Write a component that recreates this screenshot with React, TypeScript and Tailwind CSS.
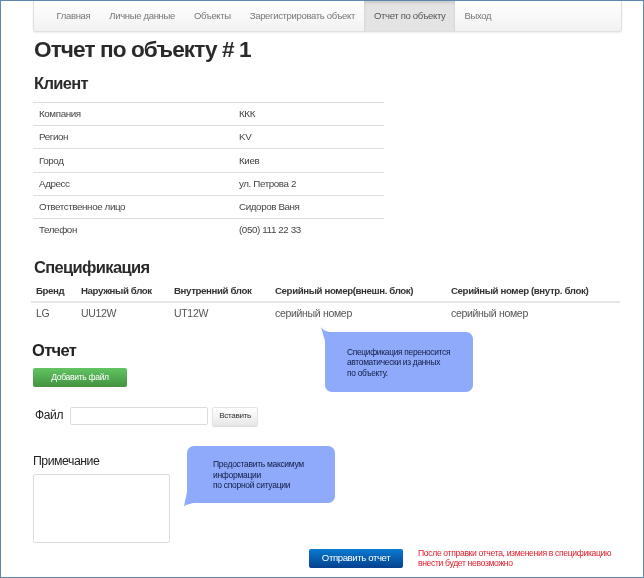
const navItems = ['Главная', 'Личные данные', 'Объекты', 'Зарегистрировать объект', 'Отчет по объекту', 'Выход'];

const clientRows = [
  ['Компания', 'ККК'],
  ['Регион', 'KV'],
  ['Город', 'Киев'],
  ['Адресс', 'ул. Петрова 2'],
  ['Ответственное лицо', 'Сидоров Ваня'],
  ['Телефон', '(050) 111 22 33'],
];

const specCols = [
  ['Бренд', 'LG', 'w-[45px]'],
  ['Наружный блок', 'UU12W', 'w-[93px]'],
  ['Внутренний блок', 'UT12W', 'w-[101px]'],
  ['Серийный номер(внешн. блок)', 'серийный номер', 'w-[176px]'],
  ['Серийный номер (внутр. блок)', 'серийный номер', 'w-[170px]'],
];

export default function App() {
  return (
    <div className="relative h-[578px] w-[644px] overflow-hidden border border-[#5f87ad] bg-white pl-[32px] font-['Liberation_Sans',Arial,sans-serif] text-[#333] blur-[0.35px]">
      {/* nav */}
      <div className="flex h-[31px] w-[589px] items-stretch rounded-b-[3px] border border-t-0 border-[#e0e0e0] bg-gradient-to-b from-white to-[#f2f2f2] pl-[13px] text-[9.5px] tracking-[-0.035em] text-[#777] shadow-[0_1px_2px_rgba(0,0,0,0.08)]">
        {navItems.map((item, i) => (
          <div
            key={item}
            className={
              i === 4
                ? 'flex items-center bg-[#e4e4e4] px-[9.5px] text-[#555] shadow-[inset_0_2px_3px_rgba(0,0,0,0.12)]'
                : 'flex items-center px-[9.5px]'
            }
          >
            {item}
          </div>
        ))}
      </div>

      <h1 className="mt-[5px] ml-[1px] text-[22.6px] leading-[26px] font-bold tracking-[-0.04em] text-[#2a2a2a]">Отчет по объекту # 1</h1>
      <h2 className="mt-[10px] ml-[1px] text-[16.5px] leading-[20px] font-bold tracking-[-0.04em] text-[#2a2a2a]">Клиент</h2>

      <table className="mt-[9px] w-[351px] border-collapse text-[9.8px] tracking-[-0.04em] text-[#444]">
        <tbody>
          {clientRows.map(([label, value]) => (
            <tr key={label} className="h-[23.2px] border-t border-[#dedede]">
              <td className="w-[206px] pt-[1px] pl-[6px]">{label}</td>
              <td className="pt-[1px]">{value}</td>
            </tr>
          ))}
        </tbody>
      </table>

      <h2 className="mt-[15px] ml-[1px] text-[16.5px] leading-[20px] font-bold tracking-[-0.04em] text-[#2a2a2a]">Спецификация</h2>

      <div className="mt-[6px] -ml-[2px] w-[589px]">
        <div className="flex h-[20px] items-center border-b-2 border-[#e6e6e6] pl-[5px] text-[9.7px] font-bold tracking-[-0.04em] text-[#333]">
          {specCols.map(([head, , width]) => (
            <div key={head} className={`${width} shrink-0 whitespace-nowrap`}>
              {head}
            </div>
          ))}
        </div>
        <div className="flex h-[22px] items-center pl-[5px] text-[10.5px] tracking-[-0.03em] text-[#555]">
          {specCols.map(([head, cell, width]) => (
            <div key={head} className={`${width} shrink-0 whitespace-nowrap`}>
              {cell}
            </div>
          ))}
        </div>
      </div>

      <h2 className="mt-[15px] -ml-[1px] text-[16.5px] leading-[20px] font-bold tracking-[-0.04em] text-[#222]">Отчет</h2>

      <button className="mt-[8px] flex h-[19px] w-[94px] items-center justify-center rounded-[2px] bg-gradient-to-b from-[#62c462] to-[#43923f] text-[8.6px] tracking-[-0.04em] text-white">
        Добавить файл
      </button>

      <div className="mt-[20px] flex items-start">
        <span className="mt-[1px] ml-[2px] w-[35px] text-[12px] leading-[15px] tracking-[-0.03em] text-[#222]">Файл</span>
        <div className="h-[18px] w-[138px] rounded-[2px] border border-[#dcdcdc] bg-white" />
        <button className="ml-[4px] h-[19px] w-[46px] rounded-[2px] border border-[#e4e4e4] bg-gradient-to-b from-white to-[#e8e8e8] text-[8.1px] tracking-[-0.04em] text-[#333] shadow-[0_1px_1px_rgba(0,0,0,0.15)]">
          Вставить
        </button>
      </div>

      <div className="mt-[28px] text-[12.3px] leading-[15px] tracking-[-0.04em] text-[#222]">Примечание</div>
      <div className="mt-[5px] h-[69px] w-[137px] rounded-[2px] border border-[#dcdcdc] bg-white" />

      {/* callouts */}
      <div className="absolute top-[331px] left-[324px] flex h-[60px] w-[148px] items-start rounded-[7px] bg-[#8fa9fb] pt-[15px] pl-[22px] text-[8.4px] leading-[10.3px] tracking-[-0.035em] text-[#111d45]">
        <svg className="absolute -top-[5px] -left-[4px]" width="14" height="14" viewBox="0 0 14 14">
          <path d="M0 0 C2 3 5 5 12 5 L12 14 L4 14 Z" fill="#8fa9fb" />
        </svg>
        <div className="relative">
          Спецификация переносится
          <br />
          автоматически из данных
          <br />
          по объекту.
        </div>
      </div>

      <div className="absolute top-[445px] left-[186px] flex h-[57px] w-[148px] items-start rounded-[7px] bg-[#8fa9fb] pt-[13px] pl-[26px] text-[8.5px] leading-[10.5px] tracking-[-0.035em] text-[#111d45]">
        <svg className="absolute -bottom-[3px] -left-[3px]" width="14" height="14" viewBox="0 0 14 14">
          <path d="M0 14 C3 13 6 11 12 11 L12 0 L3 0 Z" fill="#8fa9fb" />
        </svg>
        <div className="relative">
          Предоставить максимум
          <br />
          информации
          <br />
          по спорной ситуации
        </div>
      </div>

      {/* footer */}
      <div className="absolute top-[548px] left-[308px] flex items-start">
        <button className="h-[19px] w-[94px] rounded-[2px] bg-gradient-to-b from-[#0a7bd0] to-[#06418f] text-[9.6px] tracking-[-0.04em] text-white">
          Отправить отчет
        </button>
        <div className="-mt-[1px] ml-[15px] text-[8.6px] leading-[10px] tracking-[-0.04em] whitespace-nowrap text-[#e0202c]">
          После отправки отчета, изменения в спецификацию
          <br />
          внести будет невозможно
        </div>
      </div>
    </div>
  );
}
